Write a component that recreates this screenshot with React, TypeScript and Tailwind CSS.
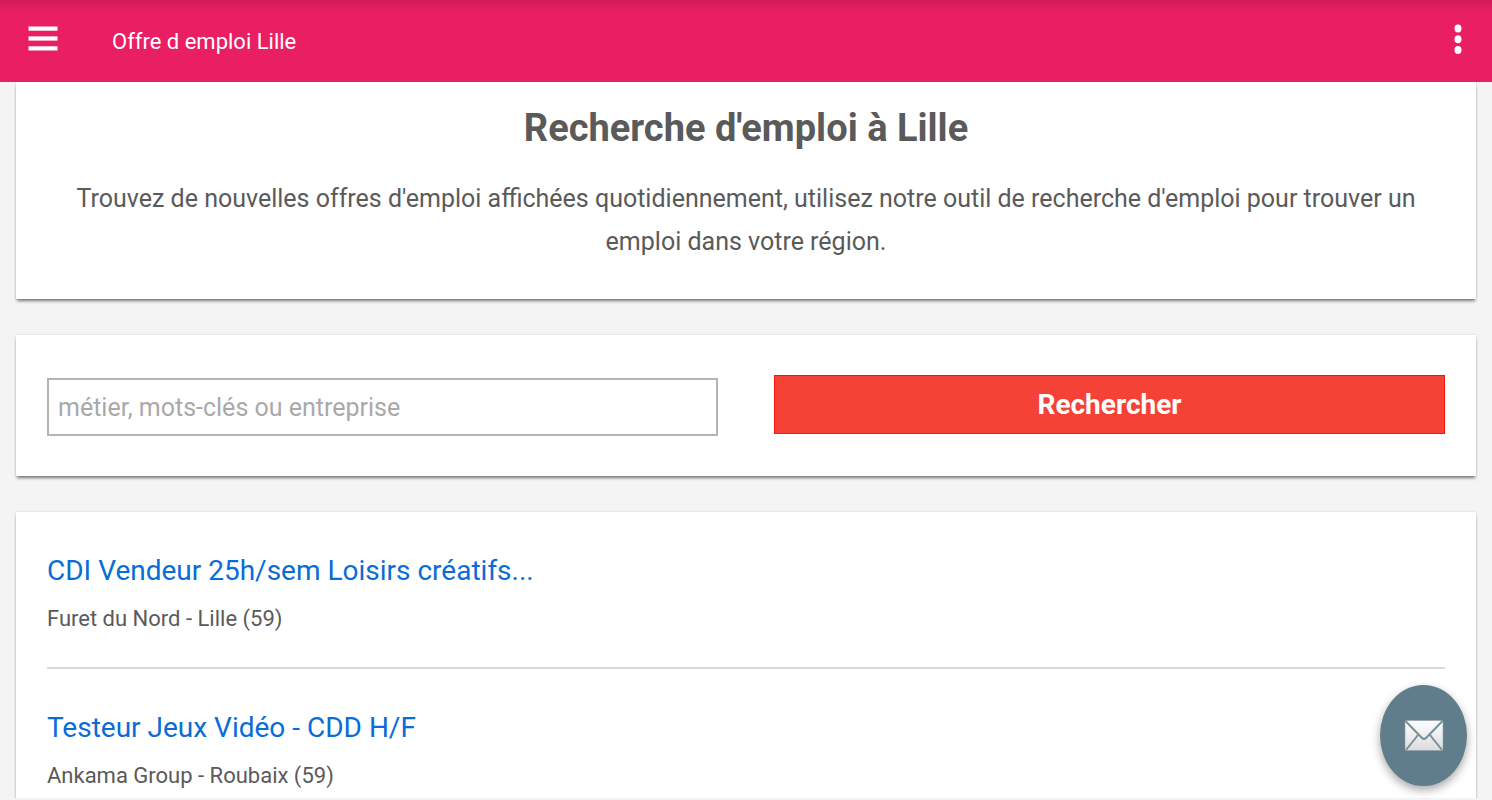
import { useState, type SyntheticEvent } from "react";

interface Job {
  id: number;
  title: string;
  company: string;
  city: string;
}

const jobs: Job[] = [
  {
    id: 1,
    title: "CDI Vendeur 25h/sem Loisirs créatifs...",
    company: "Furet du Nord",
    city: "Lille (59)",
  },
  {
    id: 2,
    title: "Testeur Jeux Vidéo - CDD H/F",
    company: "Ankama Group",
    city: "Roubaix (59)",
  },
];

const cardShadow =
  "bg-white shadow-[0_3px_3px_-1px_rgba(0,0,0,0.5),0_0_2px_rgba(0,0,0,0.15)]";

function MenuIcon() {
  return (
    <svg width="30" height="26" viewBox="0 0 30 26" fill="currentColor">
      <rect x="0.5" y="0.5" width="29" height="4.2" />
      <rect x="0.5" y="10.4" width="29" height="4.2" />
      <rect x="0.5" y="20.3" width="29" height="4.2" />
    </svg>
  );
}

function MoreIcon() {
  return (
    <svg width="8" height="30" viewBox="0 0 8 30" fill="currentColor">
      <ellipse cx="4" cy="4.4" rx="3.5" ry="4" />
      <ellipse cx="4" cy="15.2" rx="3.5" ry="4" />
      <ellipse cx="4" cy="26" rx="3.5" ry="4" />
    </svg>
  );
}

function MailIcon() {
  return (
    <svg width="40" height="32" viewBox="0 0 40 32">
      <defs>
        <linearGradient id="paper" x1="0" y1="0" x2="0" y2="1">
          <stop offset="0" stopColor="#ffffff" />
          <stop offset="1" stopColor="#dcdcdc" />
        </linearGradient>
      </defs>
      <rect
        x="1"
        y="0.5"
        width="38"
        height="30"
        rx="1.5"
        fill="url(#paper)"
        stroke="#8b9da6"
        strokeWidth="0.6"
      />
      <path
        d="M1.5 1 L17.5 17.5 Q20 20.5 22.5 17.5 L38.5 1 M2 30 L14 15 M38 30 L26 15"
        fill="none"
        stroke="#78909b"
        strokeWidth="2"
      />
    </svg>
  );
}

function Header() {
  return (
    <header className="flex h-[82px] shrink-0 items-center bg-linear-to-b from-[#d01d5b] to-[#e91e63] to-15% px-7 text-white">
      <button aria-label="Menu" className="-mt-1">
        <MenuIcon />
      </button>
      <span className="ml-[54px] text-[22px]">Offre d emploi Lille</span>
      <button aria-label="Plus d'options" className="ml-auto -mt-1 mr-0.5">
        <MoreIcon />
      </button>
    </header>
  );
}

function SearchForm() {
  const [query, setQuery] = useState("");

  const handleSubmit = (e: SyntheticEvent) => {
    e.preventDefault();
  };

  return (
    <form
      onSubmit={handleSubmit}
      className={`grid grid-cols-2 gap-14 px-[31px] py-10 ${cardShadow}`}
    >
      <input
        type="text"
        aria-label="métier, mots-clés ou entreprise"
        placeholder="métier, mots-clés ou entreprise"
        value={query}
        onChange={(e) => setQuery(e.target.value)}
        className="mt-[3px] h-[58px] min-w-0 border-2 border-[#b4b4b4] bg-white px-[9px] text-[25px] text-[#5a5a5a] placeholder:text-[#a9a9a9]"
      />
      <button
        type="submit"
        className="h-[59px] border border-[#f9140c] bg-[#f44336] text-[28px] font-bold text-white"
      >
        Rechercher
      </button>
    </form>
  );
}

function JobRow({ job }: { job: Job }) {
  return (
    <li className="border-b-2 border-[#d9d9d9] pt-[35px] pb-7">
      <a href="#" className="block text-[28px] leading-[48px] text-[#0a6cd6]">
        {job.title}
      </a>
      <p className="mt-1 text-[22px] leading-10 text-[#5a5a5a]">
        {job.company} - {job.city}
      </p>
    </li>
  );
}

export default function App() {
  return (
    <div className="relative flex h-screen flex-col bg-[#f4f4f4] pb-0.5 font-['Roboto',sans-serif]">
      <Header />
      <main className="flex min-h-0 flex-1 flex-col gap-9 overflow-hidden px-4">
        <section
          className={`px-[31px] pt-[17px] pb-9 text-center text-[#5a5a5a] ${cardShadow}`}
        >
          <h1 className="text-[38px] leading-[58px] font-bold">
            Recherche d'emploi à Lille
          </h1>
          <p className="mt-5 text-[25px] leading-[43px]">
            Trouvez de nouvelles offres d'emploi affichées quotidiennement,
            utilisez notre outil de recherche d'emploi pour trouver un emploi
            dans votre région.
          </p>
        </section>
        <SearchForm />
        <ul className={`px-[31px] ${cardShadow}`}>
          {jobs.map((job) => (
            <JobRow key={job.id} job={job} />
          ))}
        </ul>
      </main>
      <button
        aria-label="Nous contacter"
        className="absolute right-[25px] bottom-3.5 flex h-[101px] w-[87px] items-center justify-center rounded-[50%] bg-[#607d8b] shadow-[0_4px_10px_rgba(0,0,0,0.35)]"
      >
        <MailIcon />
      </button>
    </div>
  );
}
